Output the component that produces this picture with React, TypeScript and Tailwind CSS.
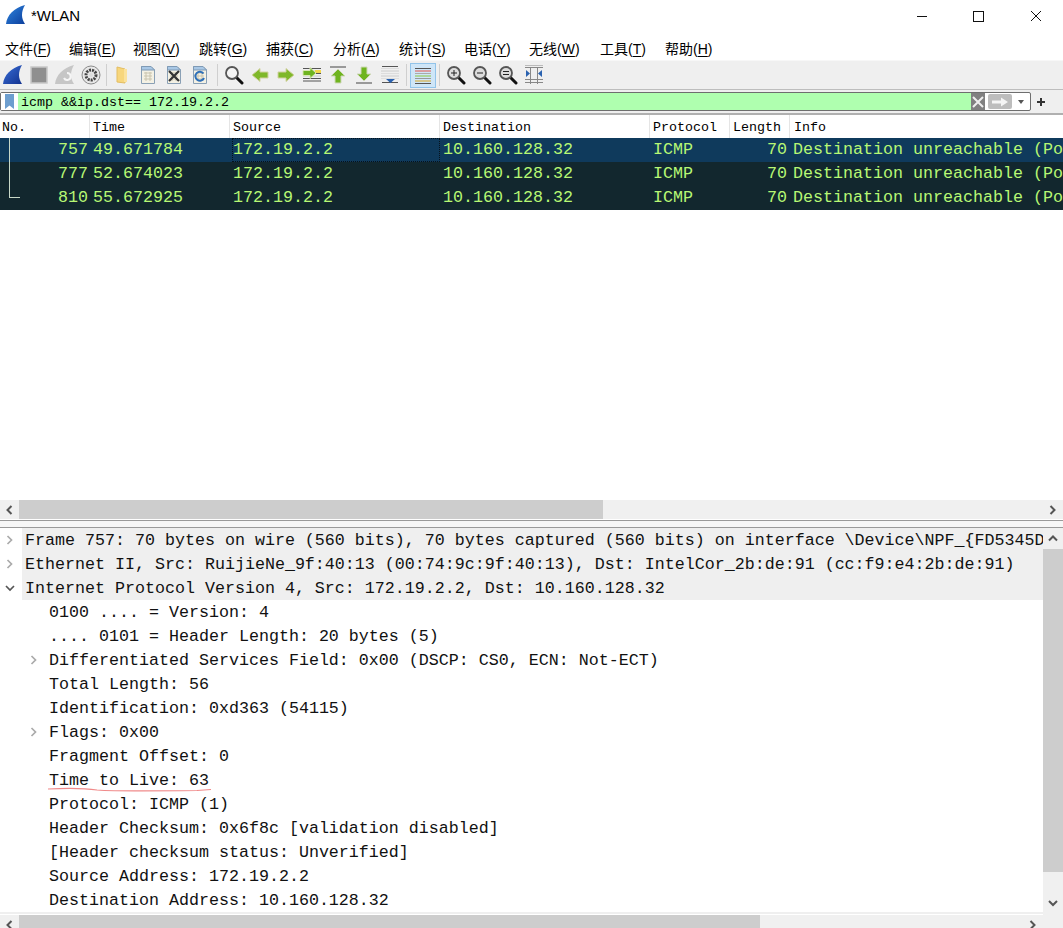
const mono = "font-['Liberation_Mono',monospace]";

const menus = [
  ['文件(', 'F', ')', 'w-[64px]'],
  ['编辑(', 'E', ')', 'w-[64px]'],
  ['视图(', 'V', ')', 'w-[66px]'],
  ['跳转(', 'G', ')', 'w-[67px]'],
  ['捕获(', 'C', ')', 'w-[67px]'],
  ['分析(', 'A', ')', 'w-[66px]'],
  ['统计(', 'S', ')', 'w-[65px]'],
  ['电话(', 'Y', ')', 'w-[65px]'],
  ['无线(', 'W', ')', 'w-[71px]'],
  ['工具(', 'T', ')', 'w-[65px]'],
  ['帮助(', 'H', ')', 'w-[64px]'],
]

function Fin({ size = 20, c1 = '#3a6fd8', c2 = '#12328f' }: { size?: number; c1?: string; c2?: string }) {
  return (
    <svg width={size} height={size} viewBox="0 0 20 20">
      <defs>
        <linearGradient id={'fin' + c1.slice(1)} x1="0" y1="0" x2="1" y2="1">
          <stop offset="0" stopColor={c1} />
          <stop offset="1" stopColor={c2} />
        </linearGradient>
      </defs>
      <path d="M0 19 C1 10 8 3 19 0 C15 7 15 13 19 19 Z" fill={`url(#fin${c1.slice(1)})`} />
    </svg>
  )
}

function Doc({ children }: { children?: React.ReactNode }) {
  return (
    <svg width="20" height="20" viewBox="0 0 20 20">
      <path d="M3.500 1.500H13L16.500 5V18.500H3.500Z" fill="#f4f1e4" stroke="#8aa0b5" />
      <path d="M3.500 1.500H13L16.500 5H3.500Z" fill="#a9c8e6" stroke="#7f9ab5" />
      <path d="M6 8H14M6 11H14M6 14H14M8 7V16M12 7V16" stroke="#c9c4ae" />
      {children}
    </svg>
  )
}

function Lens({ children }: { children?: React.ReactNode }) {
  return (
    <svg width="20" height="20" viewBox="0 0 20 20">
      <path d="M12 12L18 18" stroke="#111" strokeWidth="3" strokeLinecap="round" />
      <circle cx="8" cy="8" r="6" fill="#dcdcdc" stroke="#555" strokeWidth="1.800" />
      {children}
    </svg>
  )
}

function Arrow({ dir }: { dir: 'left' | 'right' }) {
  return (
    <svg width="20" height="20" viewBox="0 0 20 20">
      <path
        d={dir === 'left' ? 'M2 10L10 3.500V7H18V13H10V16.500Z' : 'M18 10L10 3.500V7H2V13H10V16.500Z'}
        fill="#7fb82a"
        stroke="#d2d2a0"
      />
    </svg>
  )
}

function Lines({ colors }: { colors: string[] }) {
  return (
    <>
      {colors.map((c, i) => (
        <path key={i} d={`M1 ${3.5 + i * 2.5}H19`} stroke={c} strokeWidth="1" />
      ))}
    </>
  )
}

const tools: React.ReactNode[] = [
  <Fin key="start" />,
  <svg key="stop" width="20" height="20" viewBox="0 0 20 20">
    <rect x="2" y="2" width="16" height="16" fill="#8f8f8f" stroke="#c8c8c8" strokeWidth="1.500" />
  </svg>,
  <svg key="restart" width="20" height="20" viewBox="0 0 20 20">
    <path d="M0 19 C1 10 8 3 19 0 C15 7 15 13 19 19 Z" fill="#c6c6c6" />
    <path d="M9 13a3.500 3.500 0 1 0 3-5" fill="none" stroke="#f5f5f5" strokeWidth="2" />
  </svg>,
  <svg key="options" width="20" height="20" viewBox="0 0 20 20">
    <circle cx="10" cy="10" r="9" fill="#e8e8e8" stroke="#8a8a8a" />
    <circle cx="10" cy="10" r="5" fill="none" stroke="#444" strokeWidth="3" strokeDasharray="2 1" />
    <circle cx="10" cy="10" r="2" fill="#ddd" />
  </svg>,
  'w-[5px]',
  <svg key="open" width="20" height="20" viewBox="0 0 20 20">
    <path d="M5 2L13 4V18L5 17Z" fill="#f7d67c" stroke="#e3bd62" />
    <path d="M12 4H15V17H12Z" fill="#fbe29c" />
  </svg>,
  <Doc key="file" />,
  <Doc key="close">
    <path d="M5 6L15 16M15 6L5 16" stroke="#333" strokeWidth="2.200" />
  </Doc>,
  <Doc key="reload">
    <path d="M13.500 8.500A4.500 4.500 0 1 0 14 13" fill="none" stroke="#2d6fb8" strokeWidth="2" />
  </Doc>,
  'w-[8px]',
  <svg key="find" width="20" height="20" viewBox="0 0 20 20">
    <path d="M12 12L18 18" stroke="#111" strokeWidth="3" strokeLinecap="round" />
    <circle cx="8" cy="8" r="6" fill="#f4f4f4" stroke="#555" strokeWidth="1.800" />
  </svg>,
  <Arrow key="prev" dir="left" />,
  <Arrow key="next" dir="right" />,
  <svg key="goto" width="20" height="20" viewBox="0 0 20 20">
    <Lines colors={['#555', '#ccc', '#555', '#ccc', '#555', '#555']} />
    <path d="M13 5H19V8H13Z" fill="#f2d84b" />
    <path d="M14 8L8 2.500V5.500H1V10.500H8V13.500Z" fill="#6fb41f" stroke="#d8e8b0" />
  </svg>,
  <svg key="first" width="20" height="20" viewBox="0 0 20 20">
    <path d="M2 2H18" stroke="#999" strokeWidth="2" />
    <path d="M10 4L17 11H13V18H7V11H3Z" fill="#6fb41f" stroke="#cfd8b8" />
  </svg>,
  <svg key="last" width="20" height="20" viewBox="0 0 20 20">
    <path d="M2 18H18" stroke="#999" strokeWidth="2" />
    <path d="M10 16L17 9H13V2H7V9H3Z" fill="#6fb41f" stroke="#cfd8b8" />
  </svg>,
  <svg key="auto" width="20" height="20" viewBox="0 0 20 20">
    <path d="M2 1.500H18" stroke="#555" />
    <Lines colors={['#ddd', '#ccc', '#ddd', '#ccc', '#ddd']} />
    <path d="M2 17.500H18" stroke="#555" />
    <path d="M6 14H15L10.500 18Z" fill="#2a62b0" />
  </svg>,
  'w-[7px]',
  <div key="color" className="w-[26px] h-[25px] flex items-center justify-center bg-[#cfe6f8] border border-[#92c4ea]">
    <svg width="20" height="20" viewBox="0 0 20 20">
      <path d="M2 3.500H18" stroke="#555" />
      <path d="M2 6H18" stroke="#e4574c" />
      <path d="M2 8.500H18" stroke="#aaa" />
      <path d="M2 11H18" stroke="#8cc63f" />
      <path d="M2 13.500H18" stroke="#999" />
      <path d="M2 16H18" stroke="#d9a520" />
      <path d="M2 18.500H18" stroke="#555" />
    </svg>
  </div>,
  'w-[7px]',
  <Lens key="in">
    <path d="M5 8H11M8 5V11" stroke="#222" />
  </Lens>,
  <Lens key="out">
    <path d="M5 8H11" stroke="#222" />
  </Lens>,
  <Lens key="norm">
    <path d="M5 6.500H11M5 9.500H11" stroke="#222" />
  </Lens>,
  <svg key="resize" width="20" height="20" viewBox="0 0 20 20">
    <path d="M1 2.500H19M1 17.500H19M1 14.500H19M6.500 2V19M13.500 2V19" stroke="#888" />
    <path d="M2 5V12L6 8.500ZM18 5V12L14 8.500Z" fill="#2a62b0" />
    <path d="M1 0.500H19" stroke="#bbb" />
  </svg>,
]

const columns = [
  ['No.', 'w-[90px] pl-[2px]'],
  ['Time', 'w-[140px] pl-[3px]'],
  ['Source', 'w-[210px] pl-[3px]'],
  ['Destination', 'w-[210px] pl-[3px]'],
  ['Protocol', 'w-[80px] pl-[3px]'],
  ['Length', 'w-[60px] pl-[3px]'],
  ['Info', 'flex-1 pl-[4px]'],
]

const packets = [
  ['757', '49.671784'],
  ['777', '52.674023'],
  ['810', '55.672925'],
]

const tree: [string, number, 'closed' | 'open' | null, boolean][] = [
  ['Frame 757: 70 bytes on wire (560 bits), 70 bytes captured (560 bits) on interface \\Device\\NPF_{FD5345D', 0, 'closed', true],
  ['Ethernet II, Src: RuijieNe_9f:40:13 (00:74:9c:9f:40:13), Dst: IntelCor_2b:de:91 (cc:f9:e4:2b:de:91)', 0, 'closed', true],
  ['Internet Protocol Version 4, Src: 172.19.2.2, Dst: 10.160.128.32', 0, 'open', true],
  ['0100 .... = Version: 4', 1, null, false],
  ['.... 0101 = Header Length: 20 bytes (5)', 1, null, false],
  ['Differentiated Services Field: 0x00 (DSCP: CS0, ECN: Not-ECT)', 1, 'closed', false],
  ['Total Length: 56', 1, null, false],
  ['Identification: 0xd363 (54115)', 1, null, false],
  ['Flags: 0x00', 1, 'closed', false],
  ['Fragment Offset: 0', 1, null, false],
  ['Time to Live: 63', 1, null, false],
  ['Protocol: ICMP (1)', 1, null, false],
  ['Header Checksum: 0x6f8c [validation disabled]', 1, null, false],
  ['[Header checksum status: Unverified]', 1, null, false],
  ['Source Address: 172.19.2.2', 1, null, false],
  ['Destination Address: 10.160.128.32', 1, null, false],
]

function Chevron({ dir, color = '#666', strong = false }: { dir: 'left' | 'right' | 'up' | 'down'; color?: string; strong?: boolean }) {
  const d = { left: 'M6.500 1L2.500 5L6.500 9', right: 'M2.500 1L6.500 5L2.500 9', up: 'M1 6.500L5 2.500L9 6.500', down: 'M1 3L5 7L9 3' }[dir]
  return (
    <svg width="10" height="10" viewBox="0 0 10 10" className="shrink-0">
      <path d={d} fill="none" stroke={color} strokeWidth={strong ? 2 : 1.700} />
    </svg>
  )
}

function HScroll({ thumb, h }: { thumb: string; h: string }) {
  return (
    <div className={`flex items-stretch bg-[#f0f0f0] shrink-0 ${h}`}>
      <div className="w-[19px] flex items-center justify-center">
        <Chevron dir="left" color="#555" strong />
      </div>
      <div className="flex-1 min-w-0">
        <div className={`h-full bg-[#cdcdcd] ${thumb}`} />
      </div>
      <div className="w-[20px] flex items-center justify-center">
        <Chevron dir="right" color="#555" strong />
      </div>
    </div>
  )
}

export default function App() {
  return (
    <div className="w-[1063px] h-[928px] overflow-hidden bg-white flex flex-col text-black font-['Liberation_Sans','Noto_Sans_CJK_SC',sans-serif]">
      {/* title bar */}
      <div className="h-[36px] flex items-center shrink-0">
        <div className="ml-[6px] mb-[6px]">
          <Fin size={20} c1="#2f86e0" c2="#0c3f9c" />
        </div>
        <span className="ml-[5px] mb-[4px] text-[15px]">*WLAN</span>
        <div className="ml-auto flex items-center mb-[4px] pr-[4px]">
          <svg width="46" height="16" viewBox="0 0 46 16" className="mr-[10px]">
            <path d="M18 8.500H28" stroke="#111" />
          </svg>
          <svg width="46" height="16" viewBox="0 0 46 16" className="mr-[12px]">
            <rect x="18.500" y="3.500" width="10" height="10" fill="none" stroke="#111" />
          </svg>
          <svg width="46" height="16" viewBox="0 0 46 16">
            <path d="M18 3L28 13M28 3L18 13" stroke="#111" />
          </svg>
        </div>
      </div>

      {/* menu */}
      <div className="h-[24px] flex items-center pl-[5px] pt-[2px] shrink-0 text-[14px] leading-none">
        {menus.map(([a, b, c, w]) => (
          <span key={a} className={`${w} shrink-0 whitespace-nowrap`}>
            {a}
            <span className="underline underline-offset-2">{b}</span>
            {c}
          </span>
        ))}
      </div>

      {/* toolbar */}
      <div className="h-[29px] flex items-center bg-[#efefef] border-t border-[#f7f7f7] shrink-0">
        {tools.map((t, i) =>
          typeof t === 'string' ? (
            <div key={i} className={`${t} h-[22px] flex justify-center shrink-0`}>
              <div className="w-px h-full bg-[#cfcfcf]" />
            </div>
          ) : (
            <div key={i} className="w-[26px] h-[26px] flex items-center justify-center shrink-0">
              {t}
            </div>
          ),
        )}
      </div>

      {/* display filter */}
      <div className="h-[26px] flex items-start pt-[2px] bg-[#efefef] border-t border-b-2 border-t-[#bdbdbd] border-b-[#b0b0b0] pr-[17px] shrink-0">
        <div className="flex-1 h-[19px] flex items-stretch border border-[#6e6e6e] rounded-[2px] bg-white">
          <div className="w-[17px] flex items-center justify-center bg-white">
            <svg width="11" height="15" viewBox="0 0 11 15">
              <path d="M1 0H10V15L5.500 11.500L1 15Z" fill="#6d9ecf" />
            </svg>
          </div>
          <div className={`flex-1 bg-[#afffaf] text-[13.33px] leading-[20px] pl-[3px] ${mono}`}>icmp &amp;&amp;ip.dst== 172.19.2.2</div>
          <div className="w-[14px] flex items-center justify-center bg-[#808080]">
            <svg width="14" height="14" viewBox="0 0 14 14">
              <path d="M2 2L12 12M12 2L2 12" stroke="#eee" strokeWidth="2" />
            </svg>
          </div>
          <div className="ml-[3px] w-[24px] my-[1px] flex items-center justify-center bg-[#bdbdbd] rounded-[2px]">
            <svg width="20" height="12" viewBox="0 0 20 12">
              <path d="M2 4.500H11V1.500L18 6L11 10.500V7.500H2Z" fill="#f5f5f5" />
            </svg>
          </div>
          <div className="w-[18px] flex items-center justify-center">
            <svg width="8" height="6" viewBox="0 0 8 6">
              <path d="M1 1H7L4 5Z" fill="#555" />
            </svg>
          </div>
        </div>
        <svg width="10" height="10" viewBox="0 0 10 10" className="ml-[5px] mt-[5px]">
          <path d="M1 5H9M5 1V9" stroke="#333" strokeWidth="2" />
        </svg>
      </div>

      {/* packet list header */}
      <div className={`h-[23px] flex items-stretch shrink-0 text-[13.33px] leading-[26px] ${mono}`}>
        {columns.map(([name, cls]) => (
          <div key={name} className={`${cls} border-r border-[#e5e5e5] last:border-r-0 shrink-0`}>
            {name}
          </div>
        ))}
      </div>

      {/* packet list */}
      <div className={`h-[362px] shrink-0 text-[16.67px] leading-[24px] text-[#b7f774] overflow-hidden ${mono}`}>
        {packets.map(([no, time], i) => (
          <div key={no} className={`h-[24px] flex whitespace-nowrap ${i === 0 ? 'bg-[#0f3a5c]' : 'bg-[#12272e]'}`}>
            <div className="w-[90px] pr-[2px] text-right shrink-0 relative">
              {no}
              {i < 2 ? (
                <span className="absolute left-[9px] top-0 bottom-0 w-px bg-[#c8d8c8]" />
              ) : (
                <span className="absolute left-[9px] top-0 h-[12px] w-[11px] border-l border-b border-[#c8d8c8]" />
              )}
            </div>
            <div className="w-[140px] pl-[3px] shrink-0">{time}</div>
            <div className={`shrink-0 ${i === 0 ? 'ml-[2px] w-[208px] border border-dotted border-[#06121c] leading-[22px]' : 'w-[210px] pl-[3px]'}`}>172.19.2.2</div>
            <div className="w-[210px] pl-[3px] shrink-0">10.160.128.32</div>
            <div className="w-[80px] pl-[3px] shrink-0">ICMP</div>
            <div className="w-[60px] pr-[3px] text-right shrink-0">70</div>
            <div className="flex-1 pl-[3px]">Destination unreachable (Po</div>
          </div>
        ))}
      </div>

      <HScroll thumb="w-[584px]" h="h-[19px]" />
      <div className="h-[8px] mt-[1px] shrink-0 bg-[#f7f7f7] border-y border-[#9a9a9a]" />

      {/* packet details */}
      <div className={`flex-1 min-h-0 flex text-[16.67px] leading-[24px] text-[#111] ${mono}`}>
        <div className="flex-1 min-w-0 overflow-hidden flex flex-col">
          {tree.map(([text, depth, state, hl]) => (
            <div key={text} className={`h-[24px] shrink-0 flex items-center pt-[2px] whitespace-nowrap overflow-hidden relative ${depth ? 'pl-[49px]' : 'pl-[25px]'}`}>
              {hl && <span className="absolute left-[22px] top-0 bottom-0 right-0 bg-[#efefef]" />}
              {state && (
                <span className={`absolute top-[7px] ${depth ? 'left-[29px]' : 'left-[5px]'}`}>
                  <Chevron dir={state === 'open' ? 'down' : 'right'} color={state === 'open' ? '#555' : '#aaa'} />
                </span>
              )}
              <span className="relative">{text}</span>
              {text.startsWith('Time to') && (
                <svg width="166" height="6" viewBox="0 0 166 6" className="absolute left-[47px] top-[19px]">
                  <path d="M1 2C30 0.500 40 1.500 50 3C70 4.500 110 4 150 3.500L164 2.500" fill="none" stroke="#f08a8a" strokeWidth="1.200" />
                </svg>
              )}
            </div>
          ))}
          <div className="h-[2px] bg-[#efefef] shrink-0" />
          <div className="h-[1px] shrink-0" />
          <div className="h-[13px] shrink-0 overflow-hidden">
            <HScroll thumb="w-[741px]" h="h-[19px]" />
          </div>
        </div>
        <div className="w-[20px] shrink-0 bg-[#f0f0f0] flex flex-col">
          <div className="h-[21px] flex items-center justify-center">
            <Chevron dir="up" color="#555" strong />
          </div>
          <div className="h-[323px] bg-[#cdcdcd]" />
          <div className="flex-1 flex items-end justify-center pb-[20px]">
            <Chevron dir="down" color="#555" strong />
          </div>
        </div>
      </div>
    </div>
  )
}
